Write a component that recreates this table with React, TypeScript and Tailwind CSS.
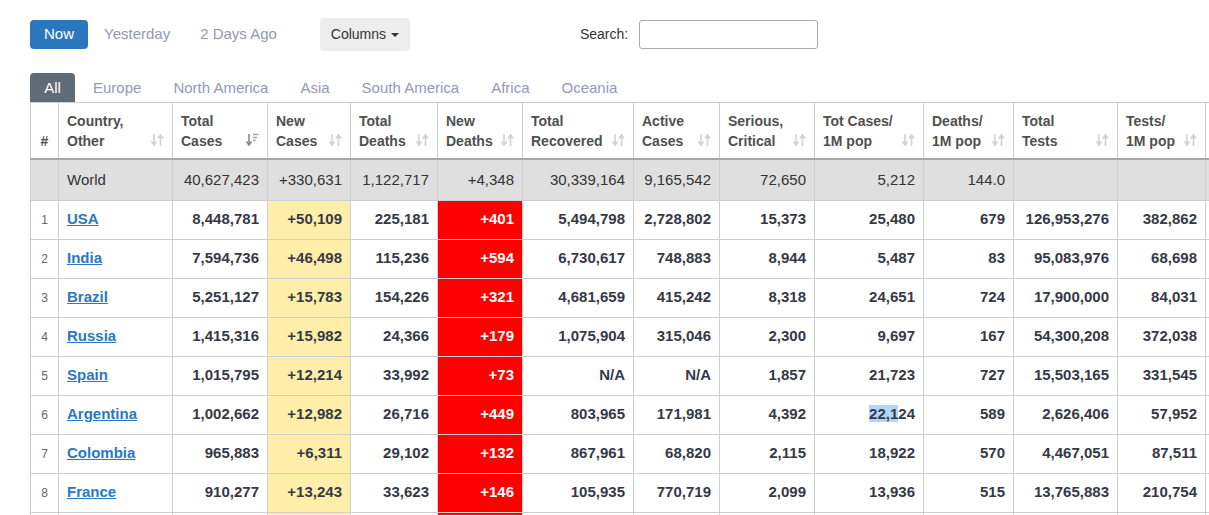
import React from 'react'

// column widths in px, measured from the table grid
const widths = ['w-[28px]', 'w-[114px]', 'w-[95px]', 'w-[83px]', 'w-[87px]', 'w-[85px]', 'w-[111px]', 'w-[86px]', 'w-[95px]', 'w-[109px]', 'w-[90px]', 'w-[104px]', 'w-[88px]', 'w-[100px]']

const headers = [
  ['Country,', 'Other'],
  ['Total', 'Cases'],
  ['New', 'Cases'],
  ['Total', 'Deaths'],
  ['New', 'Deaths'],
  ['Total', 'Recovered'],
  ['Active', 'Cases'],
  ['Serious,', 'Critical'],
  ['Tot Cases/', '1M pop'],
  ['Deaths/', '1M pop'],
  ['Total', 'Tests'],
  ['Tests/', '1M pop'],
]

const world = ['40,627,423', '+330,631', '1,122,717', '+4,348', '30,339,164', '9,165,542', '72,650', '5,212', '144.0', '', '', '']

const rows: string[][] = [
  ['USA', '8,448,781', '+50,109', '225,181', '+401', '5,494,798', '2,728,802', '15,373', '25,480', '679', '126,953,276', '382,862'],
  ['India', '7,594,736', '+46,498', '115,236', '+594', '6,730,617', '748,883', '8,944', '5,487', '83', '95,083,976', '68,698'],
  ['Brazil', '5,251,127', '+15,783', '154,226', '+321', '4,681,659', '415,242', '8,318', '24,651', '724', '17,900,000', '84,031'],
  ['Russia', '1,415,316', '+15,982', '24,366', '+179', '1,075,904', '315,046', '2,300', '9,697', '167', '54,300,208', '372,038'],
  ['Spain', '1,015,795', '+12,214', '33,992', '+73', 'N/A', 'N/A', '1,857', '21,723', '727', '15,503,165', '331,545'],
  ['Argentina', '1,002,662', '+12,982', '26,716', '+449', '803,965', '171,981', '4,392', '22,124', '589', '2,626,406', '57,952'],
  ['Colombia', '965,883', '+6,311', '29,102', '+132', '867,961', '68,820', '2,115', '18,922', '570', '4,467,051', '87,511'],
  ['France', '910,277', '+13,243', '33,623', '+146', '105,935', '770,719', '2,099', '13,936', '515', '13,765,883', '210,754'],
  ['Peru', '870,876', '+2,201', '33,875', '+63', '793,971', '43,030', '1,129', '26,330', '1,024', '4,251,591', '128,542'],
]

const tabs = ['Europe', 'North America', 'Asia', 'South America', 'Africa', 'Oceania']

function SortIcon({ active }: { active?: boolean }) {
  if (active) {
    return (
      <svg width="13" height="14" viewBox="0 0 13 14" className="absolute right-[8px] bottom-[11px]">
        <path d="M3 1v10M0.5 8.5L3 12l2.5-3.5" stroke="#8a8a8a" strokeWidth="1.6" fill="none" />
        <path d="M7 1.5h5.5M7 4.5h4M7 7.5h2.5" stroke="#a0a0a0" strokeWidth="1.6" />
      </svg>
    )
  }
  return (
    <svg width="13" height="14" viewBox="0 0 13 14" className="absolute right-[8px] bottom-[11px]">
      <path d="M3 1v10M0.5 8.5L3 12l2.5-3.5" stroke="#d2d2d2" strokeWidth="1.6" fill="none" />
      <path d="M9.5 13V3M7 5.5L9.5 2l2.5 3.5" stroke="#d2d2d2" strokeWidth="1.6" fill="none" />
    </svg>
  )
}

export default function App() {
  return (
    <div className="w-[1209px] h-[515px] overflow-hidden bg-white font-['Liberation_Sans',Arial,sans-serif]">
      <div className="pl-[30px] pt-[18px]">
        {/* top controls */}
        <div className="flex items-center h-[33px]">
          <button className="h-[29px] w-[58px] rounded-[4px] bg-[#2b77bd] text-white text-[15px]">Now</button>
          <span className="ml-[16px] text-[15px] text-[#9398b4]">Yesterday</span>
          <span className="ml-[30px] text-[15px] text-[#9398b4]">2 Days Ago</span>
          <button className="ml-[43px] h-[33px] w-[90px] rounded-[4px] bg-[#ededed] text-[14px] text-[#333] flex items-center justify-center gap-[5px]">
            Columns
            <span className="w-0 h-0 border-l-[4px] border-r-[4px] border-t-[4px] border-l-transparent border-r-transparent border-t-[#333]" />
          </button>
          <span className="ml-[170px] text-[14px] text-[#333]">Search:</span>
          <input className="ml-[11px] w-[179px] h-[29px] border border-[#aaa] rounded-[3px] outline-none" />
        </div>

        {/* region tabs */}
        <div className="flex items-stretch h-[29px] mt-[22px]">
          <div className="w-[45px] flex items-center justify-center pt-[2px] rounded-t-[4px] bg-[#5f6b76] text-white text-[15px]">All</div>
          <div className="flex items-stretch pl-[2px]">
            {tabs.map(t => (
              <div key={t} className="px-[16px] pt-[2px] flex items-center text-[15px] text-[#9398b4]">{t}</div>
            ))}
          </div>
        </div>

        {/* table */}
        <table className="table-fixed border-collapse w-[1275px] text-[15px] text-[#363945]">
          <colgroup>
            {widths.map((w, i) => <col key={i} className={w} />)}
          </colgroup>
          <thead>
            <tr>
              <th className="border border-[#cfcfcf] border-b-2 border-b-[#a8a8a8] align-bottom pb-[7px] text-[14px] font-bold text-[#505050] leading-[20px] text-center">#</th>
              {headers.map((h, i) => (
                <th key={i} className="relative border border-[#cfcfcf] border-b-2 border-b-[#a8a8a8] align-bottom pt-[8px] pb-[7px] pl-[8px] pr-[22px] text-left text-[14px] font-bold text-[#505050] leading-[20px] whitespace-nowrap">
                  {h[0]}<br />{h[1]}
                  <SortIcon active={i === 1} />
                </th>
              ))}
              <th className="border border-[#cfcfcf] border-b-2 border-b-[#a8a8a8]" />
            </tr>
          </thead>
          <tbody>
            <tr className="bg-[#dfdfdf] text-[#333]">
              <td className="h-[41px] pt-[1px] border border-[#cfcfcf]" />
              <td className="border border-[#cfcfcf] px-[8px] pt-[1px]">World</td>
              {world.map((v, i) => (
                <td key={i} className="border border-[#cfcfcf] px-[8px] pt-[1px] text-right">{v}</td>
              ))}
              <td className="border border-[#cfcfcf]" />
            </tr>
            {rows.map((r, ri) => (
              <tr key={r[0]}>
                <td className="h-[39px] border border-[#cfcfcf] text-center text-[12px] text-[#666]">{ri + 1}</td>
                <td className="border border-[#cfcfcf] px-[8px]">
                  <a href="#" className="font-bold text-[#2a78c2] underline">{r[0]}</a>
                </td>
                {r.slice(1).map((v, i) => {
                  let cls = 'border border-[#cfcfcf] px-[8px] text-right font-bold'
                  if (i === 1) cls += ' bg-[#ffeeaa]'
                  if (i === 3) cls += ' bg-[#ff0000] text-white'
                  return (
                    <td key={i} className={cls}>
                      {r[0] === 'Argentina' && i === 7 ? (
                        <><span className="bg-[#b3d4fc]">22,1</span>24</>
                      ) : v}
                    </td>
                  )
                })}
                <td className="border border-[#cfcfcf]" />
              </tr>
            ))}
          </tbody>
        </table>
      </div>
    </div>
  )
}
